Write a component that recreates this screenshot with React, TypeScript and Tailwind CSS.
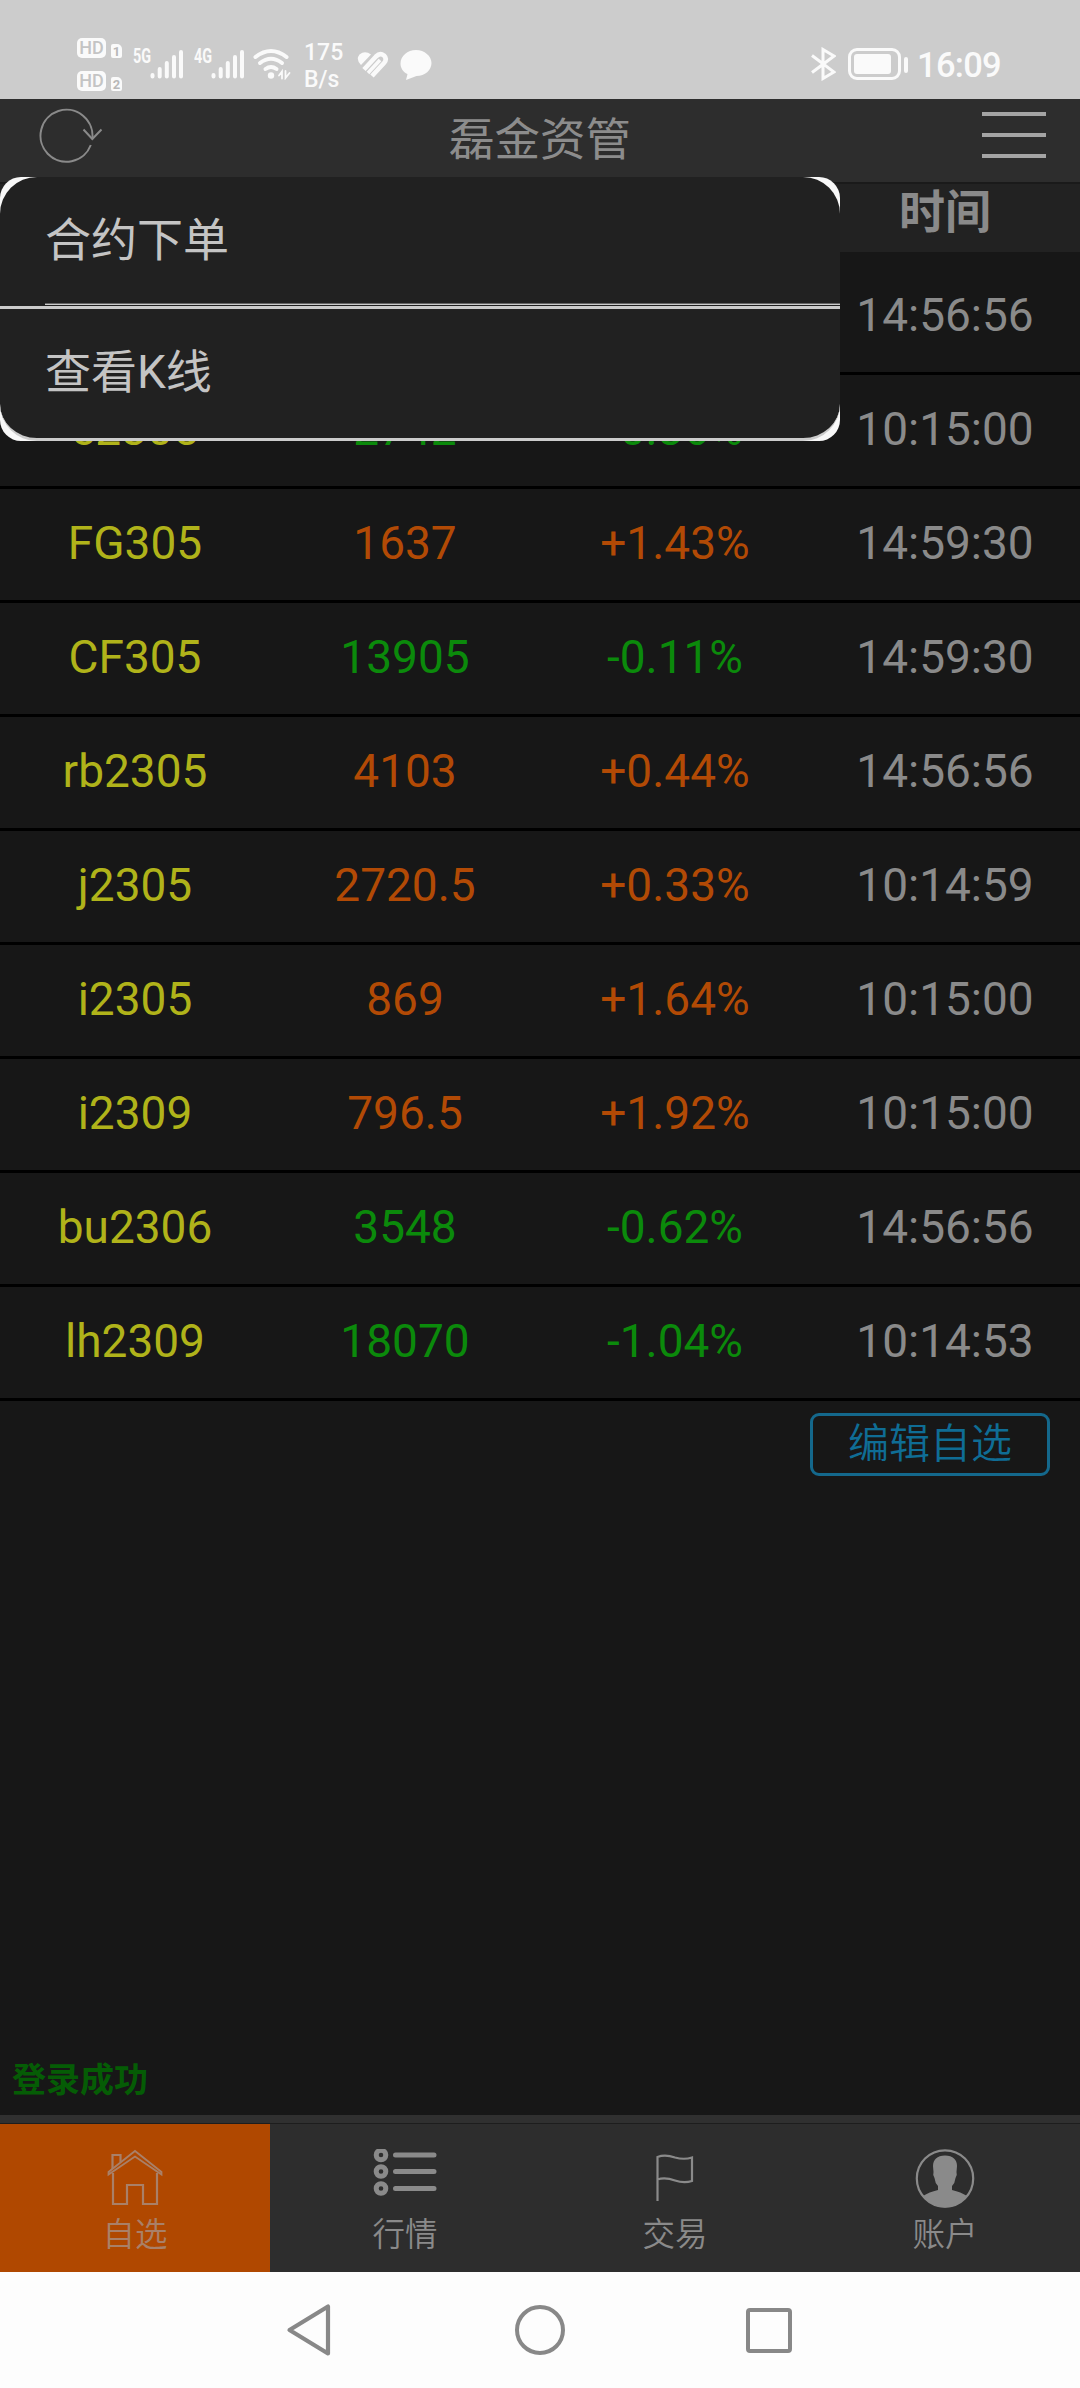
import React from 'react';

type Quote = {
    code: string;
    price: string;
    change: string;
    time: string;
};

const quotes: Quote[] = [
    { code: '', price: '', change: '', time: '14:56:56' },
    { code: 'c2305', price: '2742', change: '-0.36%', time: '10:15:00' },
    { code: 'FG305', price: '1637', change: '+1.43%', time: '14:59:30' },
    { code: 'CF305', price: '13905', change: '-0.11%', time: '14:59:30' },
    { code: 'rb2305', price: '4103', change: '+0.44%', time: '14:56:56' },
    { code: 'j2305', price: '2720.5', change: '+0.33%', time: '10:14:59' },
    { code: 'i2305', price: '869', change: '+1.64%', time: '10:15:00' },
    { code: 'i2309', price: '796.5', change: '+1.92%', time: '10:15:00' },
    { code: 'bu2306', price: '3548', change: '-0.62%', time: '14:56:56' },
    { code: 'lh2309', price: '18070', change: '-1.04%', time: '10:14:53' },
];

const HdBadge = ({ sim }: { sim: string }) => (
    <div className="flex h-5 items-end">
        <span className="flex h-5 w-[29px] items-center justify-center rounded-[5px] bg-[#fafafa] text-[18px] leading-none font-medium text-[#c4c4c4]">
            HD
        </span>
        <span className="ml-[5px] flex h-[14px] w-[11px] items-center justify-center rounded-[2px] rounded-tr-[5px] bg-[#fafafa] text-[13px] leading-none font-bold text-[#b8b8b8]">
            {sim}
        </span>
    </div>
);

const Signal = () => (
    <svg width="34" height="32" viewBox="0 0 34 32" stroke="#fafafa" strokeWidth="4" strokeLinecap="round">
        <path d="M2.5 26v1.5M9.7 20v7.5M16.8 14v13.5M24 8v19.5M31 3v24.5" />
    </svg>
);

const Wifi = () => (
    <svg width="38" height="32" viewBox="0 0 38 32" fill="none" stroke="#fafafa" strokeWidth="4" strokeLinecap="round">
        <path d="M2.5 9Q18 -3 33.500 9" />
        <path d="M7 15Q18 6.500 29 15" />
        <path d="M12.500 21Q18 17 23.500 21" />
        <circle cx="18" cy="27.500" r="3.200" fill="#fafafa" stroke="none" />
        <path d="M26 27.500l3-4v7M32.500 23v7l4-5" strokeWidth="1.800" />
    </svg>
);

const Health = () => (
    <svg width="32" height="28" viewBox="0 0 32 28" fill="none" stroke="#fafafa" strokeWidth="4.600">
        <path d="M4 14Q-1.500 8.500 2.500 3.500Q8 -1 14 3.500L4 14z" fill="#fafafa" stroke="none" />
        <path d="M7 18.500L19 5.500Q23 1.500 27 4.500Q30.500 8 27 12L15 25" />
        <path d="M11 22L23 9" strokeWidth="3.600" />
    </svg>
);

const StatusBar = () => (
    <div className="flex h-[99px] bg-[#ccc] pt-[38px] pl-[77px] text-[#fafafa]">
        <div className="flex w-[56px] flex-col gap-[13px]">
            <HdBadge sim="1" />
            <HdBadge sim="2" />
        </div>
        <span className="mt-[8px] w-[17px] origin-left scale-x-[0.72] text-[20px] leading-5 font-bold">5G</span>
        <div className="mt-[11px]"><Signal /></div>
        <span className="mt-[8px] ml-[10px] w-[17px] origin-left scale-x-[0.72] text-[20px] leading-5 font-bold">4G</span>
        <div className="mt-[11px]"><Signal /></div>
        <div className="mt-[10px] ml-2"><Wifi /></div>
        <div className="mt-px ml-[13px] w-[53px] text-[23px] leading-[27px] font-medium">
            <div>175</div>
            <div>B/s</div>
        </div>
        <div className="mt-[13px]"><Health /></div>
        <svg className="mt-[12px] ml-[11px]" width="32" height="30" viewBox="0 0 32 30" fill="#fafafa">
            <path d="M16 0C24.500 0 31.500 6 31.500 13S25 26 16.500 26L6 30L7.500 24C3 22 .5 18 .5 13.500C.5 6 7.500 0 16 0z" />
        </svg>

        <svg className="mt-[9px] mr-3 ml-auto" width="25" height="34" viewBox="0 0 25 34" fill="none" stroke="#fafafa" strokeWidth="3">
            <path d="M1 8.500L23 25L12 31.500V2.500L23 9L1 25.500" />
        </svg>
        <div className="mt-[10px] h-8 w-[53px] rounded-[9px] border-[3px] border-[#fafafa] p-[3px]">
            <div className="h-5 w-[37px] rounded-[3px] bg-[#fafafa]" />
        </div>
        <div className="mt-[19px] ml-[3px] h-4 w-1 rounded-sm bg-[#fafafa]" />
        <span className="mt-[9px] mr-[78px] ml-[9px] w-[85px] text-[34.500px] leading-9 font-medium tracking-[-0.7px]">16:09</span>
    </div>
);

const Header = () => (
    <div className="flex h-[85px] items-start justify-between border-b-2 border-[#1a1a1a] bg-[#2d2d2d]">
        <svg className="mt-[9px] ml-[38px]" width="66" height="58" viewBox="0 0 66 58" fill="none" stroke="#8a8a8a" strokeWidth="2">
            <path d="M52.800 37A26 26 0 1 1 54.300 31" />
            <path d="M45.500 21.500L54.300 31L63.500 21.500" />
        </svg>
        <h1 className="mt-[11px] mr-[6px] text-[45.500px] leading-[62px] text-[#8c8c8c]">磊金资管</h1>
        <div className="mt-[13px] mr-[34px] flex w-16 flex-col gap-[17px]">
            <div className="h-1 bg-[#a4a4a4]" />
            <div className="h-1 bg-[#a4a4a4]" />
            <div className="h-1 bg-[#a4a4a4]" />
        </div>
    </div>
);

const QuoteRow = ({ quote }: { quote: Quote }) => {
    const color = quote.change.startsWith('+') ? 'text-[#b24a05]' : 'text-[#0b8a0b]';

    return (
        <div className="grid h-[114px] grid-cols-4 items-center border-b-[3px] border-black pb-1 text-center text-[46px] leading-[54px]">
            <span className="text-[#b0b31a]">{quote.code}</span>
            <span className={color}>{quote.price}</span>
            <span className={color}>{quote.change}</span>
            <span className="text-[#8a8a8a]">{quote.time}</span>
        </div>
    );
};

// popup opened over the first rows of the list
const ContextMenu = () => (
    <div className="absolute top-[177px] left-0 h-[264px] w-[840px] overflow-hidden rounded-[21px] bg-[#f8f8f8] text-[46px] text-[#c4c4c4]">
        <div className="flex h-[132px] flex-col rounded-t-[37px] border-b-[3px] border-[#ccc] bg-[#212121]">
            <div className="pt-[32px] pl-[45px] leading-[62px]">合约下单</div>
            <div className="mt-auto mb-px ml-[45px] h-[2px] border-t border-[#666] bg-[#ccc]" />
        </div>
        <div className="h-[132px] rounded-b-[37px] border-b-[3px] border-[#ccc] bg-[#212121] pt-[32px] pl-[45px] leading-[62px]">
            查看K线
        </div>
    </div>
);

const HomeIcon = () => (
    <svg width="56" height="58" viewBox="0 0 56 58" fill="none" stroke="#a98068" strokeWidth="2.200">
        <path d="M1.500 25.500V23L28 2L54.500 23V25.500L28 7.500L1.500 25.500z" strokeWidth="1.800" />
        <path d="M5.500 20V6H13.500V13" />
        <path d="M6 24V55H20V36H36V55H50V24" />
    </svg>
);

const ListIcon = () => (
    <svg width="64" height="58" viewBox="0 0 64 58" fill="none" stroke="#8a8a8a" strokeWidth="5">
        <circle cx="8" cy="6" r="4.800" />
        <circle cx="8" cy="22.500" r="4.800" />
        <circle cx="8" cy="39.500" r="4.800" />
        <path d="M22.500 6H61M22.500 22.500H61M22.500 39.500H61" strokeLinecap="round" />
    </svg>
);

const FlagIcon = () => (
    <svg width="38" height="58" viewBox="0 0 38 58" fill="none" stroke="#8a8a8a" strokeWidth="2.200">
        <path d="M1.500 52V8Q9 5 19 8.500Q28 11 36 8.500V32Q28 34.500 19 31.500Q9 28 1.500 30.500" />
    </svg>
);

const UserIcon = () => (
    <svg width="60" height="60" viewBox="0 0 60 60" fill="#8a8a8a">
        <circle cx="30" cy="29.500" r="28.200" fill="none" stroke="#8a8a8a" strokeWidth="2.200" />
        <path d="M30 6.500C38 6.500 42 11 42 17L41.500 23Q42.500 26 40.500 29Q40 34 37 37V41Q46 43 52 47Q43 58.500 30 58.500T8 47Q14 43 23 41V37Q20 34 19.500 29Q17.500 26 18.500 23L18 17C18 11 22 6.500 30 6.500z" />
    </svg>
);

const tabs = [
    { label: '自选', icon: <HomeIcon />, active: true },
    { label: '行情', icon: <ListIcon />, active: false },
    { label: '交易', icon: <FlagIcon />, active: false },
    { label: '账户', icon: <UserIcon />, active: false },
];

const TabBar = () => (
    <div className="border-t-8 border-[#303030] bg-[#2d2d2d]">
        <div className="h-px bg-[#1d1d1d]" />
        <div className="grid h-[148px] grid-cols-4">
            {tabs.map((tab) => (
                <div
                    key={tab.label}
                    className={`flex flex-col items-center pt-[25px] ${tab.active ? 'bg-[#b04800] text-[#a98068]' : 'text-[#8a8a8a]'}`}
                >
                    <div className="h-[60px]">{tab.icon}</div>
                    <span className="mt-[2px] text-[32.500px] leading-[48px] font-[350]">{tab.label}</span>
                </div>
            ))}
        </div>
    </div>
);

const SystemNav = () => (
    <div className="flex h-[116px] items-center bg-[#fdfdfd] pl-[286px]">
        <svg width="46" height="54" viewBox="0 0 46 54" fill="none" stroke="#888" strokeWidth="4.200" strokeLinejoin="round">
            <path d="M3.500 27L42 3.500V50.500z" />
        </svg>
        <div className="ml-[183px] size-[50px] rounded-full border-4 border-[#888]" />
        <div className="ml-[181px] h-[45px] w-[46px] rounded-[4px] border-4 border-[#888]" />
    </div>
);

export default function App() {
    return (
        <div className="relative flex h-[2388px] w-[1080px] flex-col overflow-hidden bg-[#171717] font-['Roboto','Noto_Sans_CJK_SC',sans-serif]">
            <StatusBar />
            <Header />

            <div className="grid h-[68px] grid-cols-4 bg-[#222] pt-px text-center text-[46px] leading-[54px] font-bold text-[#8a8a8a]">
                <span className="col-start-4">时间</span>
            </div>

            <div className="pt-[9px]">
                {quotes.map((quote, i) => (
                    <QuoteRow key={i} quote={quote} />
                ))}
            </div>

            <button className="mt-3 mr-[30px] h-[63px] w-60 self-end rounded-[9px] border-[3px] border-[#14688c] pb-[2px] text-[41px] leading-[50px] font-[350] text-[#0f6d95]">
                编辑自选
            </button>

            <div className="mt-auto mb-[10px] pl-3 text-[34px] leading-[50px] font-bold text-[#055c05]">登录成功</div>
            <TabBar />
            <SystemNav />
            <ContextMenu />
        </div>
    );
}
